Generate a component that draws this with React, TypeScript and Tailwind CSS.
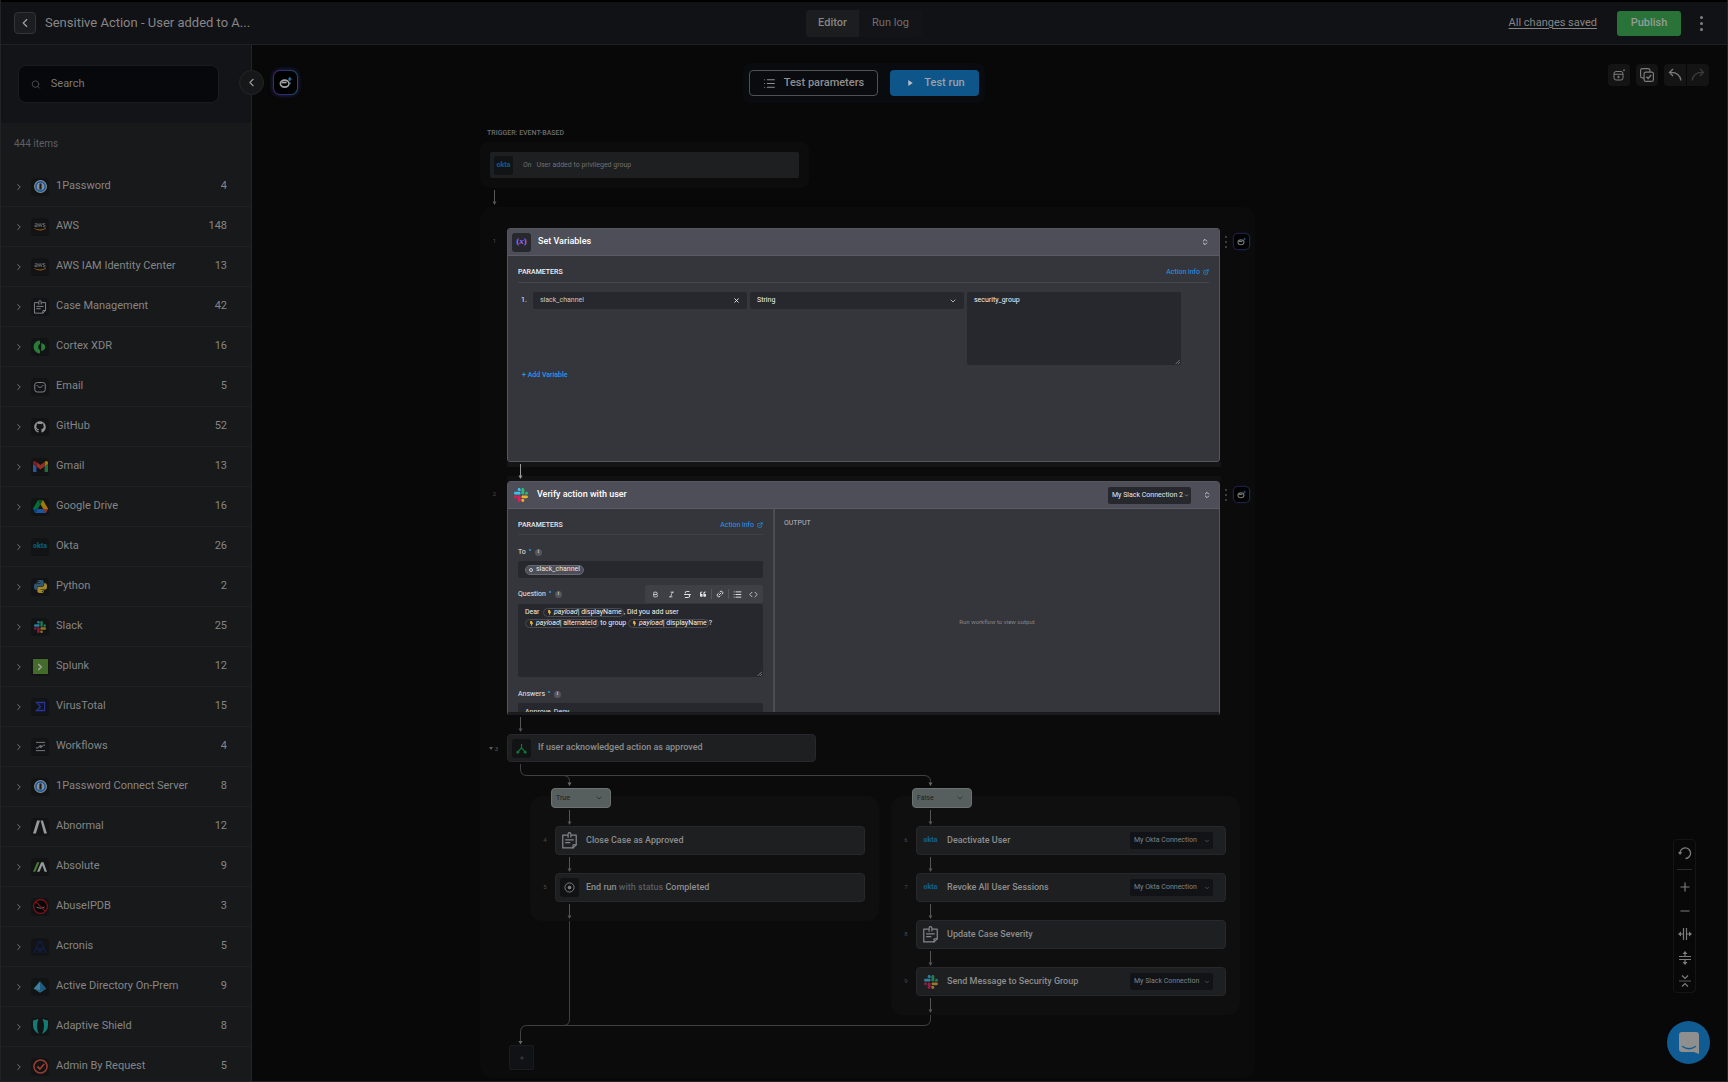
import * as React from "react";
import {
  Bold,
  ChevronDown,
  ChevronLeft,
  ChevronRight,
  ChevronsUpDown,
  Code,
  ExternalLink,
  Italic,
  Link2,
  List,
  Minus,
  Plus,
  Search,
  Strikethrough,
  X,
} from "lucide-react";
import { FaAws, FaGithub, FaQuoteLeft, FaBolt } from "react-icons/fa";

interface IconProps {
  className?: string;
}

/* ---------- logos ---------- */

const SlackLogo: React.FC<IconProps> = ({ className }) => (
  <svg viewBox="0 0 122.8 122.8" className={className}>
    <path
      fill="#e01e5a"
      d="M25.8 77.6c0 7.100-5.800 12.900-12.900 12.900S0 84.700 0 77.600s5.800-12.900 12.900-12.900h12.900v12.900zm6.500 0c0-7.100 5.800-12.900 12.900-12.900s12.900 5.800 12.900 12.900v32.300c0 7.100-5.800 12.900-12.900 12.900s-12.900-5.800-12.900-12.900V77.600z"
    />
    <path
      fill="#36c5f0"
      d="M45.200 25.800c-7.100 0-12.900-5.800-12.900-12.900S38.100 0 45.200 0s12.900 5.800 12.900 12.900v12.900H45.200zm0 6.500c7.100 0 12.900 5.800 12.900 12.900s-5.800 12.900-12.900 12.900H12.900C5.800 58.100 0 52.300 0 45.200s5.800-12.900 12.900-12.900h32.300z"
    />
    <path
      fill="#2eb67d"
      d="M97 45.200c0-7.100 5.800-12.900 12.900-12.900s12.900 5.800 12.900 12.900-5.800 12.900-12.900 12.900H97V45.200zm-6.500 0c0 7.100-5.800 12.900-12.900 12.900s-12.900-5.800-12.900-12.900V12.900C64.700 5.800 70.500 0 77.600 0s12.900 5.800 12.900 12.900v32.300z"
    />
    <path
      fill="#ecb22e"
      d="M77.600 97c7.100 0 12.900 5.800 12.900 12.900s-5.800 12.900-12.900 12.900-12.900-5.800-12.900-12.900V97h12.900zm0-6.500c-7.100 0-12.900-5.800-12.900-12.900s5.800-12.900 12.900-12.900h32.300c7.100 0 12.900 5.800 12.900 12.900s-5.800 12.900-12.900 12.900H77.600z"
    />
  </svg>
);

const GmailLogo: React.FC<IconProps> = ({ className }) => (
  <svg viewBox="52 42 88 66" className={className}>
    <path fill="#4285f4" d="M58 108h14V74L52 59v43c0 3.320 2.690 6 6 6" />
    <path fill="#34a853" d="M120 108h14c3.320 0 6-2.690 6-6V59l-20 15" />
    <path fill="#fbbc04" d="M120 48v26l20-15v-8c0-7.420-8.470-11.650-14.400-7.200" />
    <path fill="#ea4335" d="M72 74V48l24 18 24-18v26L96 92" />
    <path fill="#c5221f" d="M52 51v8l20 15V48l-5.600-4.200c-5.940-4.450-14.400-.220-14.400 7.200" />
  </svg>
);

const DriveLogo: React.FC<IconProps> = ({ className }) => (
  <svg viewBox="0 0 87.3 78" className={className}>
    <path fill="#0066da" d="M6.600 66.850l3.850 6.650c.8 1.400 1.950 2.500 3.300 3.300L27.500 53H0c0 1.550.4 3.100 1.200 4.500z" />
    <path fill="#00ac47" d="M43.650 25L29.900 1.200c-1.350.8-2.500 1.900-3.300 3.300L1.200 48.500C.4 49.900 0 51.450 0 53h27.500z" />
    <path fill="#ea4335" d="M73.550 76.800c1.350-.8 2.500-1.900 3.300-3.300l9.250-16c.8-1.400 1.200-2.950 1.200-4.500H59.800l5.850 11.500z" />
    <path fill="#00832d" d="M43.650 25L57.400 1.200C56.050.4 54.500 0 52.900 0H34.400c-1.600 0-3.150.45-4.500 1.200z" />
    <path fill="#2684fc" d="M59.800 53H27.500L13.750 76.800c1.350.8 2.900 1.200 4.500 1.200h50.800c1.600 0 3.150-.45 4.500-1.200z" />
    <path fill="#ffba00" d="M73.400 26.500l-12.700-22c-.8-1.400-1.950-2.500-3.300-3.300L43.650 25 59.800 53h27.450c0-1.550-.4-3.100-1.200-4.500z" />
  </svg>
);

const SNAKE =
  "M14.250.18l.9.2.73.26.59.3.45.32.34.34.25.34.16.33.1.3.04.26.02.2-.01.13V8.500l-.05.63-.13.55-.21.46-.26.38-.3.31-.33.25-.35.19-.35.14-.33.1-.3.07-.26.04-.21.02H8.770l-.69.05-.59.14-.5.22-.41.27-.33.32-.27.35-.2.36-.15.37-.1.35-.07.32-.04.27-.02.21v3.060H3.170l-.21-.03-.28-.07-.32-.12-.35-.18-.36-.26-.36-.36-.35-.46-.32-.59-.28-.73-.21-.88-.14-1.050-.05-1.230.06-1.220.16-1.040.24-.87.32-.71.36-.57.4-.44.42-.33.42-.24.4-.16.36-.1.32-.05.24-.01h.16l.06.01h8.160v-.83H6.180l-.01-2.750-.02-.37.05-.34.11-.31.17-.28.25-.26.31-.23.38-.2.44-.18.51-.15.58-.12.64-.1.71-.06.77-.04.84-.02 1.270.05zm-6.300 1.980l-.23.33-.08.41.08.41.23.34.33.22.41.09.41-.09.33-.22.23-.34.08-.41-.08-.41-.23-.33-.33-.22-.41-.09-.41.09z";

const PythonLogo: React.FC<IconProps> = ({ className }) => (
  <svg viewBox="0 0 24 24" className={className}>
    <path fill="#4584b6" d={SNAKE} />
    <path fill="#ffd43b" d={SNAKE} transform="rotate(180 12 12)" />
  </svg>
);

const OnePasswordLogo: React.FC<IconProps> = ({ className }) => (
  <svg viewBox="0 0 24 24" className={className}>
    <circle cx="12" cy="12" r="12" fill="#d8dde2" />
    <circle cx="12" cy="12" r="8.500" fill="#d8dde2" stroke="#1a8cff" strokeWidth="3" />
    <rect x="10" y="6.500" width="4" height="11" rx="1" fill="#222" />
  </svg>
);

// the smile under the letters is orange, so the glyph is drawn twice and cropped
const AwsLogo: React.FC = () => (
  <svg viewBox="0 64 640 512" className="w-3">
    <svg width="640" height="364" viewBox="0 0 640 364">
      <FaAws size={640} color="#c9cbd0" />
    </svg>
    <svg y="364" width="640" height="276" viewBox="0 364 640 276">
      <FaAws size={640} color="#ff9900" />
    </svg>
  </svg>
);

const EmailLogo: React.FC = () => (
  <svg viewBox="0 0 24 24" className="size-3" fill="none" stroke="#c9cbd0" strokeWidth="2">
    <rect x="1.500" y="3" width="21" height="19" rx="5" />
    <path d="M6 9c4 5 8 5 12 0" strokeLinecap="round" />
  </svg>
);

const CaseLogo: React.FC<IconProps> = ({ className }) => (
  <svg
    viewBox="0 0 24 24"
    className={className}
    fill="none"
    stroke="#c9cbd0"
    strokeWidth="1.700"
    strokeLinecap="round"
    strokeLinejoin="round"
  >
    <path d="M9 4.500H2.500V22.500H17L21.500 18V4.500H15" />
    <path d="M17 22.500V18h4.500M6.500 11h11M6.500 15h6" />
    <path d="M10 7.500V3a2 2 0 0 1 4 0v4" />
  </svg>
);

const CortexLogo: React.FC<IconProps> = ({ className }) => (
  <svg viewBox="0 0 24 24" className={className} fill="#3ac24d">
    <path d="M12 1C6 1 1 6 1 12s5 11 11 11v-6c-2-1-3-2.500-3-5s1-4 3-5z" />
    <path d="M14 5c5 1 7 4 7 7s-2 6-7 7z" />
  </svg>
);

const VirusTotalLogo: React.FC<IconProps> = ({ className }) => (
  <svg viewBox="0 0 24 24" className={className} fill="none" stroke="#394eff" strokeWidth="2.500">
    <path d="M3 3h18v18H3l9-9z" />
    <path d="M8 6.500h9M8 17.500h9" strokeWidth="1" />
  </svg>
);

const WorkflowsLogo: React.FC<IconProps> = ({ className }) => (
  <svg viewBox="0 0 24 24" className={className} fill="none" stroke="#c9cbd0" strokeWidth="2">
    <path d="M2 3h20M2 21h20M2 15h5l3-4h4M22 9h-4l-3 4h-4" />
    <circle cx="12" cy="12" r="2" />
  </svg>
);

const AbnormalLogo: React.FC<IconProps> = ({ className }) => (
  <svg viewBox="0 0 24 24" className={className} fill="#f2f2f2">
    <path d="M7 1h5L5 23H0zM13 1h4l7 22h-5z" />
  </svg>
);

const AbsoluteLogo: React.FC<IconProps> = ({ className }) => (
  <svg viewBox="0 0 24 24" className={className}>
    <path fill="#6cc04a" d="M7 4h4L4 20H0z" />
    <path fill="#f2f2f2" d="M14 4h4l6 16h-4L16 9l-5 11H7z" />
  </svg>
);

const AbuseLogo: React.FC<IconProps> = ({ className }) => (
  <svg viewBox="0 0 24 24" className={className}>
    <circle cx="12" cy="12" r="11" fill="#000" stroke="#d8131b" strokeWidth="1.800" />
    <path d="M5 12c4 2.500 10 2.500 14 0-1 4-13 4-14 0z" fill="#eee" />
    <path d="M4.500 4.500l15 15" stroke="#d8131b" strokeWidth="1.800" />
  </svg>
);

const AcronisLogo: React.FC<IconProps> = ({ className }) => (
  <svg viewBox="0 0 24 24" className={className} fill="none" stroke="#12245c" strokeWidth="3">
    <path d="M2 22L10 3h4l8 19M6 15h12M9 22l3-7 3 7" />
  </svg>
);

const DirectoryLogo: React.FC<IconProps> = ({ className }) => (
  <svg viewBox="0 0 24 24" className={className}>
    <path fill="#5fc9f3" d="M12 2L1 15l11 3z" />
    <path fill="#2a8ccf" d="M12 2l11 13-11 3z" />
    <path fill="#3fa9dd" d="M1 15l11 7 11-7-11 3z" />
  </svg>
);

const ShieldLogo: React.FC<IconProps> = ({ className }) => (
  <svg viewBox="0 0 24 24" className={className} fill="#12c2b0">
    <path d="M0 2.500L9 0C5.500 7 5.500 16 9.500 24 3 21 0 16 0 10zM24 2.500L15 0c3.500 7 3.500 16-.5 24C21 21 24 16 24 10z" />
  </svg>
);

const AdminLogo: React.FC<IconProps> = ({ className }) => (
  <svg viewBox="0 0 24 24" className={className} fill="none" stroke="#f0573f" strokeWidth="2.500">
    <circle cx="12" cy="12" r="10.500" />
    <path d="M7 12l4 4 7-8" strokeWidth="3" />
  </svg>
);

const OktaLogo: React.FC = () => (
  <span className="block text-[7px] leading-none font-black text-[#0a84d0]">okta</span>
);

const Robot: React.FC<IconProps> = ({ className }) => (
  <svg viewBox="0 0 24 24" className={className} fill="none">
    <ellipse cx="10.500" cy="14" rx="8" ry="6.500" stroke="#a4a4a4" strokeWidth="3" />
    <path d="M5 12h9" stroke="#a4a4a4" strokeWidth="3" />
    <path d="M20 2v7M16.500 5.500h7" stroke="#2f86c9" strokeWidth="2" />
    <path d="M21 12v3" stroke="#2f86c9" strokeWidth="1.500" />
  </svg>
);

/* ---------- sidebar ---------- */

interface Integration {
  name: string;
  count: number;
  logo: React.ReactNode;
}

const integrations: Integration[] = [
  { name: "1Password", count: 4, logo: <OnePasswordLogo className="size-[13px]" /> },
  { name: "AWS", count: 148, logo: <AwsLogo /> },
  { name: "AWS IAM Identity Center", count: 13, logo: <AwsLogo /> },
  { name: "Case Management", count: 42, logo: <CaseLogo className="size-[14px]" /> },
  { name: "Cortex XDR", count: 16, logo: <CortexLogo className="size-[14px]" /> },
  { name: "Email", count: 5, logo: <EmailLogo /> },
  { name: "GitHub", count: 52, logo: <FaGithub className="size-3 text-[#e8e8e8]" /> },
  { name: "Gmail", count: 13, logo: <GmailLogo className="w-[15px]" /> },
  { name: "Google Drive", count: 16, logo: <DriveLogo className="w-[15px]" /> },
  { name: "Okta", count: 26, logo: <OktaLogo /> },
  { name: "Python", count: 2, logo: <PythonLogo className="size-[13px]" /> },
  { name: "Slack", count: 25, logo: <SlackLogo className="size-3" /> },
  {
    name: "Splunk",
    count: 12,
    logo: (
      <span className="flex size-[15px] items-center justify-center bg-[#65a637]">
        <ChevronRight className="size-[10px] text-white" strokeWidth={4} />
      </span>
    ),
  },
  { name: "VirusTotal", count: 15, logo: <VirusTotalLogo className="size-[11px]" /> },
  { name: "Workflows", count: 4, logo: <WorkflowsLogo className="size-[11px]" /> },
  { name: "1Password Connect Server", count: 8, logo: <OnePasswordLogo className="size-[13px]" /> },
  { name: "Abnormal", count: 12, logo: <AbnormalLogo className="size-[14px]" /> },
  { name: "Absolute", count: 9, logo: <AbsoluteLogo className="size-[14px]" /> },
  { name: "AbuseIPDB", count: 3, logo: <AbuseLogo className="size-[15px]" /> },
  { name: "Acronis", count: 5, logo: <AcronisLogo className="size-[14px]" /> },
  { name: "Active Directory On-Prem", count: 9, logo: <DirectoryLogo className="size-[14px]" /> },
  { name: "Adaptive Shield", count: 8, logo: <ShieldLogo className="size-[15px]" /> },
  { name: "Admin By Request", count: 5, logo: <AdminLogo className="size-[15px]" /> },
];

const Sidebar: React.FC = () => (
  <aside className="flex w-[251px] shrink-0 flex-col overflow-hidden border-r border-[#232427] bg-[#17191b]">
    <div className="bg-[#121418] pt-5 pr-8 pb-5 pl-[17px]">
      <label className="flex h-[38px] items-center gap-[10px] rounded-lg border border-[#1a1c20] bg-[#07080b] px-3">
        <Search className="size-[11px] text-[#55575b]" />
        <input
          type="text"
          aria-label="Search"
          placeholder="Search"
          className="w-full bg-transparent text-[11px] text-[#8a8a8a] outline-none placeholder:text-[#7b7b7b]"
        />
      </label>
    </div>
    <p className="pt-[11px] pl-[13px] text-[10px] leading-5 text-[#5e5f61]">444 items</p>
    <ul className="mt-[13px]">
      {integrations.map((item) => (
        <li key={item.name} className="border-b border-[#1e2022]">
          <button type="button" className="flex h-[39px] w-full items-center pr-6 pl-[13px] text-left">
            <ChevronRight className="size-[10px] text-[#858585]" strokeWidth={2} />
            <span className="ml-[7px] flex size-[18px] items-center justify-center rounded bg-[#111315]">
              <span className="opacity-60">{item.logo}</span>
            </span>
            <span className="ml-[7px] flex-1 text-[11px] text-[#858585]">{item.name}</span>
            <span className="text-[11px] text-[#858585]">{item.count}</span>
          </button>
        </li>
      ))}
    </ul>
  </aside>
);

/* ---------- canvas ---------- */

const AiButton: React.FC<{ small?: boolean }> = ({ small }) => (
  <button
    type="button"
    aria-label="AI assistant"
    className={
      small
        ? "flex size-[17px] items-center justify-center rounded-[5px] bg-gradient-to-r from-[#2e1742] via-[#191d4a] to-[#12363a] p-px shadow-[0_0_2px_#1c1d4c]"
        : "flex size-[25px] items-center justify-center rounded-[7px] bg-gradient-to-r from-[#4a246c] via-[#2a2c74] to-[#1b5558] p-px shadow-[0_0_4px_#27286a]"
    }
  >
    <span
      className={
        small
          ? "flex size-full items-center justify-center rounded bg-black"
          : "flex size-full items-center justify-center rounded-md bg-black"
      }
    >
      <Robot className={small ? "size-[9px] opacity-70" : "size-[13px]"} />
    </span>
  </button>
);

const Arrow: React.FC = () => (
  <svg width="30" height="19" viewBox="0 0 30 19" className="text-[#55565a]">
    <path d="M14.500 2v12" stroke="currentColor" strokeWidth="1" />
    <path d="M12.500 13.500h4l-2 3.500z" fill="currentColor" />
  </svg>
);

const ActionInfo: React.FC = () => (
  <a href="#action-info" className="flex items-center gap-[3px] text-[7px] leading-3 text-[#1f9cf0]">
    Action info
    <ExternalLink className="size-[6px]" strokeWidth={2.5} />
  </a>
);

interface SelectProps {
  label: string;
  value: string;
  className: string;
  chevronClass?: string;
}

const Select: React.FC<SelectProps> = ({ label, value, className, chevronClass }) => (
  <span className={`grid items-center ${className}`}>
    <select
      aria-label={label}
      defaultValue={value}
      className="col-start-1 row-start-1 w-full appearance-none bg-transparent text-[7px] outline-none"
    >
      <option>{value}</option>
    </select>
    <ChevronDown
      className={`pointer-events-none col-start-1 row-start-1 justify-self-end ${
        chevronClass || "size-[6px]"
      }`}
      strokeWidth={2}
    />
  </span>
);

const StepSide: React.FC = () => (
  <span className="mt-1 ml-[5px] flex h-[19px] items-center gap-[6px]">
    <button type="button" aria-label="Step menu" className="flex flex-col gap-[3px]">
      <i className="size-[2px] rounded-full bg-[#4e4f52]" />
      <i className="size-[2px] rounded-full bg-[#4e4f52]" />
      <i className="size-[2px] rounded-full bg-[#4e4f52]" />
    </button>
    <AiButton small />
  </span>
);

const ResizeMark: React.FC = () => (
  <svg
    viewBox="0 0 8 8"
    className="pointer-events-none col-start-1 row-start-1 mr-px mb-px size-[5px] self-end justify-self-end"
    stroke="#a5a6aa"
  >
    <path d="M1 8L8 1M5 8l3-3" />
  </svg>
);

const SetVariables: React.FC = () => {
  const [name, setName] = React.useState<string>("slack_channel");
  const [text, setText] = React.useState<string>("security_group");

  return (
    <section className="h-[234px] w-[713px] rounded-[3px] border border-[#55565e] bg-[#35363b] text-[#f1f1f2]">
      <header className="flex h-[27px] items-center rounded-t-[2px] border-b border-[#5a5b63] bg-[#4d4e57] pr-[10px] pl-1">
        <span className="flex size-[19px] items-center justify-center rounded-[3px] bg-[#27282d] font-['Liberation_Serif',serif] text-[9px] font-bold text-[#9b6bff]">
          (<i>x</i>)
        </span>
        <h2 className="ml-[7px] flex-1 text-[9px] font-medium text-white">Set Variables</h2>
        <button type="button" aria-label="Resize step">
          <ChevronsUpDown className="size-[8px]" strokeWidth={2.5} />
        </button>
      </header>
      <div className="px-[10px] pt-[10px]">
        <div className="flex items-center justify-between border-b border-[#46474d] pb-1">
          <h3 className="text-[7px] leading-3 font-medium">PARAMETERS</h3>
          <ActionInfo />
        </div>
        <div className="mt-[9px] flex pr-7 text-[7px]">
          <span className="w-[15px] pl-[3px] leading-[17px]">1.</span>
          <div className="grid flex-1 grid-cols-3 items-start gap-[3px]">
            <span className="flex h-[17px] items-center rounded-[2px] bg-[#27282d] px-[7px]">
              <input
                aria-label="Variable name"
                value={name}
                onChange={(e) => setName(e.target.value)}
                className="w-full bg-transparent text-[#c9cacd] outline-none"
              />
              <button type="button" aria-label="Clear name" onClick={() => setName("")}>
                <X className="size-[7px]" strokeWidth={3} />
              </button>
            </span>
            <Select
              label="Variable type"
              value="String"
              className="h-[17px] rounded-[2px] bg-[#27282d] px-[7px]"
              chevronClass="size-[8px]"
            />
            <span className="grid">
              <textarea
                aria-label="Variable value"
                value={text}
                onChange={(e) => setText(e.target.value)}
                className="col-start-1 row-start-1 h-[73px] resize-none rounded-[2px] bg-[#27282d] px-[7px] py-1 leading-[9px] outline-none"
              />
              <ResizeMark />
            </span>
          </div>
        </div>
        <button type="button" className="mt-1 ml-1 block text-[7px] leading-3 font-medium text-[#1f9cf0]">
          + Add Variable
        </button>
      </div>
    </section>
  );
};

const FieldLabel: React.FC<{ text: string }> = ({ text }) => (
  <span className="flex h-3 items-center text-[7px]">
    {text}
    <i className="mb-1 ml-[3px] size-[2px] rounded-full bg-[#1f9cf0]" />
    <span className="ml-1 flex size-[7px] items-center justify-center rounded-full bg-[#55565c] font-serif text-[5px] italic">
      i
    </span>
  </span>
);

const PayloadChip: React.FC<{ field: string }> = ({ field }) => (
  <span className="inline-flex h-[9px] items-center rounded-full border border-[#4a4b51] pr-px pl-[3px] align-middle">
    <FaBolt className="mr-[2px] size-[5px] text-[#f5b942]" />
    <i>payload</i>
    <span>| {field}</span>
  </span>
);

const FormatButton: React.FC<{ label: string; children: React.ReactNode }> = ({ label, children }) => (
  <button type="button" aria-label={label} className="flex h-full w-4 items-center justify-center">
    {children}
  </button>
);

const VerifyAction: React.FC = () => (
  <section className="flex h-[234px] w-[713px] flex-col overflow-hidden rounded-t-[4px] border border-b-[3px] border-[#55565e] border-b-[#1b1b1d] bg-[#35363b] text-[#e6e6e8]">
    <header className="flex h-[27px] shrink-0 items-center border-b border-[#5a5b63] bg-[#4d4e57] pr-2 pl-[6px]">
      <SlackLogo className="size-[14px]" />
      <h2 className="ml-[9px] flex-1 text-[9px] font-medium text-white">Verify action with user</h2>
      <Select
        label="Connection"
        value="My Slack Connection 2"
        className="h-[17px] w-[83px] rounded-[2px] bg-[#27282d] pr-[2px] pl-1"
        chevronClass="size-[5px]"
      />
      <button type="button" aria-label="Resize step" className="ml-3">
        <ChevronsUpDown className="size-[8px]" strokeWidth={2.5} />
      </button>
    </header>
    <div className="flex min-h-0 flex-1">
      <div className="w-[267px] border-r-2 border-[#4c4d54] px-[10px] pt-[10px]">
        <div className="flex items-center justify-between border-b border-[#404147] pb-[3px]">
          <h3 className="text-[7px] leading-3 font-medium">PARAMETERS</h3>
          <ActionInfo />
        </div>
        <div className="mt-[11px]">
          <FieldLabel text="To" />
          <div
            role="textbox"
            aria-label="To"
            className="mt-[3px] flex h-[17px] items-center rounded-[2px] bg-[#27282d] px-[7px] text-[7px]"
          >
            <span className="flex h-[10px] items-center gap-[3px] rounded-full border border-[#686970] bg-[#4d4e57] px-[3px]">
              <i className="size-[4px] rounded-full border border-[#d0d0d3]" />
              slack_channel
            </span>
          </div>
        </div>
        <div className="mt-[7px]">
          <div className="flex h-[18px] items-center justify-between">
            <FieldLabel text="Question" />
            <div className="flex h-[18px] items-center rounded-[2px] bg-[#3f4046] px-[2px]">
              <FormatButton label="Bold">
                <Bold className="size-[7px]" strokeWidth={2.5} />
              </FormatButton>
              <FormatButton label="Italic">
                <Italic className="size-[7px]" strokeWidth={2.5} />
              </FormatButton>
              <FormatButton label="Strikethrough">
                <Strikethrough className="size-[9px]" strokeWidth={2.5} />
              </FormatButton>
              <FormatButton label="Quote">
                <FaQuoteLeft className="size-[6px]" />
              </FormatButton>
              <i className="h-[10px] w-px bg-[#55565c]" />
              <FormatButton label="Link">
                <Link2 className="size-[8px] -rotate-45" strokeWidth={2.5} />
              </FormatButton>
              <i className="h-[10px] w-px bg-[#55565c]" />
              <FormatButton label="List">
                <List className="size-[9px]" strokeWidth={2.5} />
              </FormatButton>
              <FormatButton label="Code">
                <Code className="size-[9px]" strokeWidth={2} />
              </FormatButton>
            </div>
          </div>
          <div className="mt-px grid">
            <div
              role="textbox"
              aria-label="Question"
              aria-multiline="true"
              className="col-start-1 row-start-1 h-[73px] rounded-[2px] bg-[#27282d] px-[7px] py-[3px] text-[7px] leading-[11px] text-[#f1f1f2]"
            >
              Dear &nbsp;
              <PayloadChip field="displayName" />, Did you add user
              <br />
              <PayloadChip field="alternateId" />
              {" to group "}
              <PayloadChip field="displayName" />?
            </div>
            <ResizeMark />
          </div>
        </div>
        <div className="mt-[11px]">
          <FieldLabel text="Answers" />
          <input
            aria-label="Answers"
            defaultValue="Approve, Deny"
            className="mt-[3px] block h-[17px] w-full rounded-[2px] bg-[#27282d] px-[7px] text-[7px] outline-none"
          />
        </div>
      </div>
      <div className="flex flex-1 flex-col px-[9px] pt-2">
        <h3 className="text-[7px] leading-3 text-[#b9babd]">OUTPUT</h3>
        <p className="mt-[87px] text-center text-[6px] leading-3 text-[#85868b]">Run workflow to view output</p>
      </div>
    </div>
  </section>
);

interface StepProps {
  step: number;
  icon: React.ReactNode;
  title: React.ReactNode;
  connection?: string;
}

const Step: React.FC<StepProps> = ({ step, icon, title, connection }) => (
  <div className="flex">
    <span className="w-[25px] pt-[9px] pl-[5px] text-center text-[6px] leading-[9px] text-[#4a4b4d]">{step}</span>
    <div className="flex h-[29px] w-[310px] items-center rounded border border-[#26282b] bg-[#1d1f21] pr-3 pl-[4px]">
      <span className="flex size-[19px] items-center justify-center">{icon}</span>
      <span className="ml-[7px] flex-1 text-[9px] font-medium text-[#8d8d8d]">{title}</span>
      {connection && (
        <Select
          label={`Connection for step ${step}`}
          value={connection}
          className="h-[17px] w-[83px] rounded-[2px] bg-[#111317] pr-[3px] pl-1 text-[#828384]"
          chevronClass="size-[6px]"
        />
      )}
    </div>
  </div>
);

const BranchGroup: React.FC<{ label: string; children: React.ReactNode }> = ({ label, children }) => (
  <div className="mt-[34px] w-[349px] rounded-xl bg-[#0f0f0f]">
    <div className="-mt-2 ml-[21px] flex">
      <Select
        label={`${label} branch`}
        value={label}
        className="h-[20px] w-[60px] rounded border border-[#6a7272] bg-[#565e5e] pr-[7px] pl-1 text-[#1d2121]"
        chevronClass="size-[8px]"
      />
    </div>
    {React.Children.map(children, (child) => (
      <React.Fragment>
        <div className="-mb-px ml-[25px]">
          <Arrow />
        </div>
        {child}
      </React.Fragment>
    ))}
    <div className="ml-[25px]">
      <Arrow />
    </div>
  </div>
);

const caseIcon = <CaseLogo className="size-[17px] opacity-60" />;
const oktaIcon = (
  <span className="opacity-60">
    <OktaLogo />
  </span>
);

const Workflow: React.FC = () => (
  <div className="flex w-[775px] flex-col pt-[82px]">
    <h3 className="pl-[7px] text-[7px] leading-3 font-medium text-[#6d6d6d]">TRIGGER: EVENT-BASED</h3>
    <div className="mt-[3px] w-[329px] rounded-lg bg-[#0c0c0c] p-[10px]">
      <div className="flex h-[26px] items-center rounded-[2px] bg-[#1d1f21] pl-1 text-[7px] text-[#707071]">
        <span className="flex size-[19px] items-center justify-center rounded-[2px] bg-[#111315]">
          <span className="opacity-60">
            <OktaLogo />
          </span>
        </span>
        <i className="ml-[10px]">On</i>
        <span className="ml-[5px]">User added to privileged group</span>
      </div>
    </div>
    <div>
      <Arrow />
    </div>
    <div className="w-[775px] rounded-xl bg-[#0b0b0b] pt-[21px] pb-2">
      <div className="flex">
        <span className="w-[27px] pt-2 pl-[2px] text-center text-[6px] leading-[9px] text-[#4a4b4d]">1</span>
        <SetVariables />
        <StepSide />
      </div>
      <div className="ml-[27px] h-[19px] w-[714px] border-y-[5px] border-t-[#151515] border-b-[#111111]">
        <svg width="30" height="19" viewBox="0 0 30 19" className="-mt-[5px] text-[#9a9a9d]">
          <path d="M13.500 2v12" stroke="currentColor" />
          <path d="M11.500 13.500h4l-2 3.500z" fill="currentColor" />
        </svg>
      </div>
      <div className="flex">
        <span className="w-[27px] pt-2 pl-[2px] text-center text-[6px] leading-[9px] text-[#4a4b4d]">2</span>
        <VerifyAction />
        <StepSide />
      </div>
      <div className="ml-[26px]">
        <Arrow />
      </div>
      <div className="flex">
        <span className="flex w-[27px] items-center justify-center gap-[2px] text-[6px] text-[#5d5e60]">
          <svg viewBox="0 0 8 6" className="w-[4px]" fill="currentColor">
            <path d="M0 0h8L4 6z" />
          </svg>
          3
        </span>
        <div className="flex h-[28px] w-[309px] items-center rounded border border-[#26282b] bg-[#1d1f21] pl-1">
          <span className="flex size-[19px] items-center justify-center rounded-[3px] bg-[#111315]">
            <svg viewBox="0 0 12 12" className="size-[11px]" fill="none" stroke="#0f7a3c">
              <path d="M6 1v4M6 5L2 10M6 5l4 5" strokeWidth="1.200" />
              <circle cx="2" cy="10" r="1.200" fill="#0f7a3c" />
              <circle cx="10" cy="10" r="1.200" fill="#0f7a3c" />
            </svg>
          </span>
          <span className="ml-[7px] text-[9px] font-medium text-[#8d8d8d]">If user acknowledged action as approved</span>
        </div>
      </div>
      <div className="relative ml-[50px] flex items-start gap-3">
        {/* split and merge lines between the branches */}
        <svg
          width="440"
          height="285"
          viewBox="0 0 440 285"
          className="pointer-events-none absolute top-0 -left-[23px]"
          fill="none"
          stroke="#404144"
        >
          <path d="M13.500 2v5q0 6.500 6.500 6.500H56q6.500 0 6.500 6V21M56 13.500H417q6.500 0 6.500 6V21" />
          <path d="M62.500 159v98q0 6.500-6.500 6.500M423.500 253v4q0 6.500-6.500 6.500H20q-6.500 0-6.500 6.500v10" />
          <path
            d="M60.500 20.500h4l-2 3.500zM421.500 20.500h4l-2 3.500zM11.500 279h4l-2 3.500z"
            fill="#66676a"
            stroke="none"
          />
        </svg>
        <BranchGroup label="True">
          <Step step={4} icon={caseIcon} title="Close Case as Approved" />
          <Step
            step={5}
            icon={
              <span className="flex size-[19px] items-center justify-center rounded-[3px] bg-[#101214]">
                <svg viewBox="0 0 12 12" className="size-[11px]" fill="none" stroke="#858585">
                  <circle cx="6" cy="6" r="5" />
                  <circle cx="6" cy="6" r="1.500" fill="#858585" />
                </svg>
              </span>
            }
            title={
              <React.Fragment>
                End run <span className="text-[#5c5d5f]">with status</span> Completed
              </React.Fragment>
            }
          />
        </BranchGroup>
        <BranchGroup label="False">
          <Step step={6} icon={oktaIcon} title="Deactivate User" connection="My Okta Connection" />
          <Step step={7} icon={oktaIcon} title="Revoke All User Sessions" connection="My Okta Connection" />
          <Step step={8} icon={caseIcon} title="Update Case Severity" />
          <Step
            step={9}
            icon={<SlackLogo className="size-[14px] opacity-60" />}
            title="Send Message to Security Group"
            connection="My Slack Connection"
          />
        </BranchGroup>
      </div>
      <button
        type="button"
        aria-label="Add step"
        className="mt-[30px] ml-[29px] flex size-[25px] items-center justify-center rounded-[2px] border border-[#191b1f] bg-[#101216] text-[#5d5e60]"
      >
        <Plus className="size-[6px]" />
      </button>
    </div>
  </div>
);

const ToolButton: React.FC<{ label: string; className?: string; children: React.ReactNode }> = ({
  label,
  className,
  children,
}) => (
  <button
    type="button"
    aria-label={label}
    className={`flex size-[22px] items-center justify-center bg-[#141414] text-[#7c7c7c] ${className || ""}`}
  >
    {children}
  </button>
);

const CanvasTools: React.FC = () => (
  <div className="absolute top-[19px] right-[18px] flex gap-[6px]">
    <ToolButton label="Archive" className="rounded">
      <svg viewBox="0 0 24 24" className="size-3" fill="none" stroke="currentColor" strokeWidth="2">
        <rect x="2" y="5" width="18" height="17" rx="4" />
        <path d="M2 10.500h18" />
        <circle cx="11" cy="16" r="1.500" fill="currentColor" />
        <circle cx="22" cy="2.500" r="1" fill="currentColor" />
      </svg>
    </ToolButton>
    <ToolButton label="Select steps" className="rounded">
      <svg viewBox="0 0 24 24" className="size-[14px]" fill="none" stroke="currentColor" strokeWidth="2">
        <rect x="7" y="7" width="16" height="16" rx="3" />
        <path d="M7 17H4a3 3 0 0 1-3-3V4a3 3 0 0 1 3-3h10a3 3 0 0 1 3 3v3" />
        <path d="M11 15l3 3 5-6" strokeWidth="2.500" />
      </svg>
    </ToolButton>
    <span className="flex gap-px">
      <ToolButton label="Undo" className="rounded-l">
        <svg viewBox="0 0 14 14" className="size-[14px]" fill="none" stroke="currentColor" strokeWidth="1.300">
          <path d="M5 1L1.500 4.500 5 8M1.500 4.500C8 4 12 7 13 12.500" />
        </svg>
      </ToolButton>
      <ToolButton label="Redo" className="rounded-r">
        <svg viewBox="0 0 14 14" className="size-[14px]" fill="none" stroke="#3c3c3c" strokeWidth="1.300">
          <path d="M9 1l3.500 3.500L9 8M12.500 4.500C6 4 2 7 1 12.500" />
        </svg>
      </ToolButton>
    </span>
  </div>
);

const ZoomTools: React.FC = () => (
  <div className="absolute right-[31px] bottom-[88px] flex w-[23px] flex-col items-center rounded border border-[#151515] text-[#7c7c7c]">
    <button type="button" aria-label="Reset view" className="flex h-[25px] items-center">
      <svg viewBox="0 0 14 14" className="size-[14px]" fill="none" stroke="currentColor" strokeWidth="1.300">
        <path d="M2 7.500A5.300 5.300 0 1 1 7.500 12.500" />
        <path d="M0 6l2 3 2.300-2.700z" fill="currentColor" stroke="none" />
      </svg>
    </button>
    <i className="my-1 h-px w-[15px] bg-[#2a2a2a]" />
    <button type="button" aria-label="Zoom in" className="flex h-[26px] items-center">
      <Plus className="size-[14px]" strokeWidth={2} />
    </button>
    <button type="button" aria-label="Zoom out" className="flex h-[21px] items-center">
      <Minus className="size-[14px]" strokeWidth={2} />
    </button>
    <button type="button" aria-label="Spread columns" className="flex h-[25px] items-center">
      <svg viewBox="0 0 14 14" className="size-[14px]" fill="none" stroke="currentColor" strokeWidth="1.200">
        <path d="M5.500 1v12M8.500 1v12M1 7h4M9 7h4" />
        <path d="M3 4.500v5L0 7zM11 4.500v5L14 7z" fill="currentColor" stroke="none" />
      </svg>
    </button>
    <button type="button" aria-label="Spread rows" className="flex h-[23px] items-center">
      <svg viewBox="0 0 14 14" className="size-[14px]" fill="none" stroke="currentColor" strokeWidth="1.200">
        <path d="M1 5.500h12M1 8.500h12M7 1v4M7 9v4" />
        <path d="M4.500 3h5L7 0zM4.500 11h5L7 14z" fill="currentColor" stroke="none" />
      </svg>
    </button>
    <button type="button" aria-label="Collapse" className="flex h-[23px] items-center">
      <svg viewBox="0 0 14 14" className="size-[14px]" fill="none" stroke="currentColor" strokeWidth="1.200">
        <path d="M1 7h12" stroke="#4a4a4a" />
        <path d="M4 1.500L7 4.500l3-3M4 12.500l3-3 3 3" />
      </svg>
    </button>
  </div>
);

const Header: React.FC = () => (
  <header className="grid h-[45px] shrink-0 grid-cols-3 items-center border-t-2 border-b border-t-black border-b-[#1f2023] bg-[#111216] px-[13px]">
    <div className="flex items-center gap-[9px]">
      <button
        type="button"
        aria-label="Back"
        className="flex size-[22px] items-center justify-center rounded border border-[#333437] bg-[#1c1d20] text-[#a0a0a0]"
      >
        <ChevronLeft className="size-[14px]" strokeWidth={2} />
      </button>
      <h1 className="text-[13px] text-[#868686]">Sensitive Action - User added to A...</h1>
    </div>
    <nav className="flex justify-center text-[11px]">
      <button type="button" className="h-[27px] w-[53px] rounded-l bg-[#1c1d1f] font-medium text-[#858585]">
        Editor
      </button>
      <button type="button" className="h-[27px] w-[63px] rounded-r bg-[#131417] text-[#707070]">
        Run log
      </button>
    </nav>
    <div className="flex items-center justify-end">
      <a href="#changes" className="text-[11px] text-[#858585] underline underline-offset-2">
        All changes saved
      </a>
      <button
        type="button"
        className="ml-5 h-[25px] w-16 rounded-[3px] bg-[#297338] text-[11px] font-medium text-[#959b96]"
      >
        Publish
      </button>
      <button type="button" aria-label="More" className="mr-[10px] ml-[17px] flex w-[6px] flex-col items-center gap-[3px]">
        <i className="size-[3px] rounded-full bg-[#808080]" />
        <i className="size-[3px] rounded-full bg-[#808080]" />
        <i className="size-[3px] rounded-full bg-[#808080]" />
      </button>
    </div>
  </header>
);

const App: React.FC = () => (
  <div className="flex h-screen flex-col overflow-hidden border-r border-b border-l border-[#222325] bg-[#080808] font-[Roboto,'Noto_Sans',sans-serif]">
    <Header />
    <div className="relative flex min-h-0 flex-1">
      <Sidebar />
      <main className="min-w-0 flex-1 overflow-hidden pl-[228px]">
        <Workflow />
      </main>

      {/* floating controls over the canvas */}
      <div className="absolute top-[25px] left-[238px] flex items-center gap-[9px]">
        <button
          type="button"
          aria-label="Collapse sidebar"
          className="flex size-[25px] items-center justify-center rounded-full border border-[#242527] bg-[#161719] text-[#9a9a9a]"
        >
          <ChevronLeft className="size-[13px]" />
        </button>
        <AiButton />
      </div>
      <div className="pointer-events-none absolute inset-x-0 top-[18px] flex justify-center">
        <div className="pointer-events-auto flex gap-3 rounded-lg bg-[#0a0b0f] px-[6px] py-[7px] text-[11px] font-medium">
          <button
            type="button"
            className="flex h-[26px] w-[129px] items-center justify-center gap-2 rounded border border-[#505155] text-[#8f8f8f]"
          >
            <List className="size-[13px]" />
            Test parameters
          </button>
          <button
            type="button"
            className="flex h-[26px] w-[89px] items-center justify-center gap-[11px] rounded bg-[#0e558a] text-[#9aa2a8]"
          >
            <svg viewBox="0 0 6 8" className="ml-1 h-[6px] w-[5px]" fill="#b5bcc2">
              <path d="M0 0l6 4-6 4z" />
            </svg>
            Test run
          </button>
        </div>
      </div>
      <CanvasTools />
      <ZoomTools />
      <button
        type="button"
        aria-label="Open chat"
        className="absolute right-[17px] bottom-[17px] flex size-[43px] items-center justify-center rounded-full bg-[#105c92]"
      >
        <svg viewBox="0 0 20 22" className="h-[22px] w-5">
          <path d="M3 0h14a3 3 0 0 1 3 3v19l-5-2H3a3 3 0 0 1-3-3V3a3 3 0 0 1 3-3z" fill="#8f8f8f" />
          <path d="M3.500 14.500q6.500 4.500 13 0" fill="none" stroke="#105c92" strokeWidth="1.300" strokeLinecap="round" />
        </svg>
      </button>
    </div>
  </div>
);

export default App;
